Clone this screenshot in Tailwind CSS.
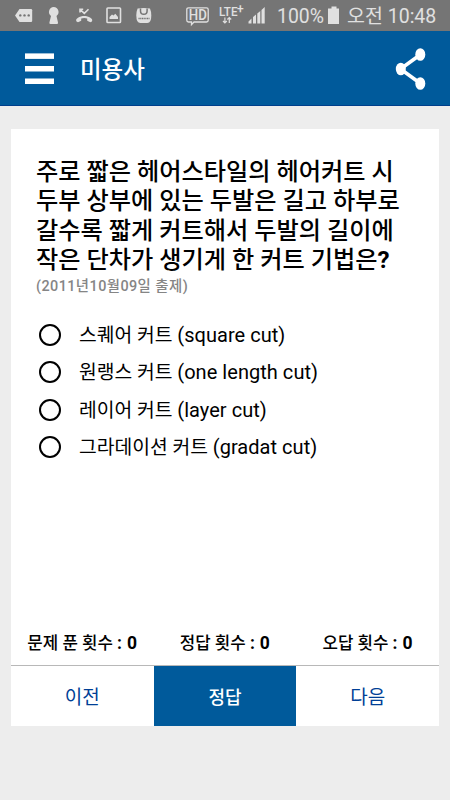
<!DOCTYPE html>
<html lang="ko">
<head>
    <meta charset="UTF-8">
    <meta name="viewport" content="width=device-width, initial-scale=1.0">
    <title>미용사</title>
    <script src="https://cdn.jsdelivr.net/npm/@tailwindcss/browser@4"></script>
</head>
<body class="h-[800px] overflow-hidden bg-[#ededed] font-[Roboto,'Noto_Sans_CJK_KR',sans-serif] text-black flex flex-col">
    <!-- Status bar -->
    <div class="h-[31px] shrink-0 bg-[#757575] flex items-center text-[#e0e0e0]">
        <svg class="w-[160px] h-[31px]" viewBox="0 0 160 31" fill="#e0e0e0">
            <path d="M19.5 9H31a1.2 1.2 0 0 1 1.2 1.2V20.8a1.2 1.2 0 0 1-1.2 1.2H19.5L15 15.5z"/>
            <g fill="#757575"><circle cx="20.3" cy="15.4" r="1.2"/><circle cx="24.5" cy="15.4" r="1.2"/><circle cx="28.7" cy="15.4" r="1.2"/></g>
            <path d="M53.7 7a5 5 0 0 1 2.8 9L58 22.5q.3 1.5-1.2 1.5h-6.2q-1.5 0-1.2-1.5L51 16a5 5 0 0 1 2.7-9z"/>
            <path d="M76.5 21.5c-1-1.8.2-3 1.5-3.8 3.6-2.2 8.8-2.2 12.4 0 1.3.8 2.5 2 1.5 3.8l-1.5.7-3.2-1.5v-2.1c-2-.8-4-.8-6 0v2.1L78 22.2z"/>
            <path d="M80 12.5V9.3h3.2M80.3 9.6l4 3.8 4.2-4.2" fill="none" stroke="#e0e0e0" stroke-width="1.6"/>
            <rect x="107" y="8" width="13.5" height="14.5" rx=".8" fill="none" stroke="#e0e0e0" stroke-width="1.6"/>
            <path d="M109.5 19v-2l2.5-2.5 1.5 1 1.8-1.8 2.7 3.3v2z"/>
            <path d="M137.6 8.5q6.2-1.2 12.4 0 1.3 3 1.3 7 0 7.5-4 7.5h-7q-4 0-4-7.5 0-4 1.3-7z"/>
            <path d="M140.5 8.5v2.5a3.3 3.3 0 0 0 6.6 0V8.5" fill="none" stroke="#757575" stroke-width="1.5"/>
            <path d="M138.5 18.5h11" stroke="#757575" stroke-width="1.4" stroke-dasharray="1.2 .5"/>
        </svg>
        <svg class="w-[112px] h-[31px] ml-[2px] mr-[3px]" viewBox="162 0 112 31" fill="#e0e0e0">
            <path d="M188.5 7.8h18q1.7 0 1.7 1.7v10.8q0 1.7-1.7 1.7h-12.5l-2.5 2.6V22h-3q-1.7 0-1.7-1.7V9.5q0-1.7 1.7-1.7z" fill="none" stroke="#e0e0e0" stroke-width="1.3"/>
            <text x="188.8" y="20" font-size="14.5" font-weight="500" textLength="18" lengthAdjust="spacingAndGlyphs">HD</text>
            <text x="219" y="16" font-size="12" font-weight="500" textLength="18.5" lengthAdjust="spacingAndGlyphs">LTE</text>
            <text x="237" y="13" font-size="12" font-weight="500">+</text>
            <path d="M224.9 17.5v5.5M223 21l1.9 2 1.9-2M229.3 23V17.5M227.4 19.5l1.9-2 1.9 2" fill="none" stroke="#e0e0e0" stroke-width="1.2"/>
            <path d="M248.5 21.5 251.5 18.5V23.5H248.5zM253 17 256 14.5V23.5H253zM257.3 13.5 260.3 11V23.5H257.3zM261.5 10 264.7 7V23.5H261.5z"/>
        </svg>
        <span class="text-[19.4px] w-[51px] whitespace-nowrap pt-[2px]">100%</span>
        <svg class="w-[12px] h-[31px]" viewBox="0 0 12 31" fill="#e0e0e0"><path d="M3.5 6.5h5v2H11V24H0V8.5h3.5z"/></svg>
        <span class="ml-[7px] whitespace-nowrap text-[19.5px] pt-[2px]">오전 10:48</span>
    </div>

    <!-- Header -->
    <header class="h-[75px] shrink-0 bg-[#005a9b] border-b border-[#003f8c] flex items-center pl-[25px] pr-6">
        <svg class="w-[29px] h-[32px] mt-px" viewBox="0 0 29 32" fill="#fff">
            <rect y=".4" width="29" height="5.5"/>
            <rect y="13" width="29" height="5.5"/>
            <rect y="25.5" width="29" height="5.5"/>
        </svg>
        <h1 class="ml-[26px] pt-[6px] text-[23.5px] font-medium text-white">미용사</h1>
        <svg class="ml-auto mt-px w-[31px] h-[44px]" viewBox="395 47 31 44" fill="#fff">
            <path d="M420.5 54.5 400.5 69 420.5 83.5" fill="none" stroke="#fff" stroke-width="3.6"/>
            <ellipse cx="420.3" cy="54.5" rx="5" ry="6.3"/>
            <ellipse cx="400.8" cy="69" rx="5" ry="6.3"/>
            <ellipse cx="420.3" cy="83.5" rx="5" ry="6.3"/>
        </svg>
    </header>

    <!-- Question card -->
    <main class="mt-[23px] ml-[11px] w-[428px] h-[597px] bg-white flex flex-col">
        <h2 class="pl-[25px] pt-[29px] text-[24.2px] leading-[29.3px] font-medium whitespace-nowrap">주로 짧은 헤어스타일의 헤어커트 시<br>두부 상부에 있는 두발은 길고 하부로<br>갈수록 짧게 커트해서 두발의 길이에<br>작은 단차가 생기게 한 커트 기법은<b>?</b></h2>
        <p class="pl-[25px] mt-[3px] text-[14.4px] leading-[18px] tracking-[0.43px] font-medium text-[#858585]">(2011년10월09일 출제)</p>
        <ul class="mt-[20px] pl-[28px] text-[19.3px] leading-[37.5px]">
            <li class="h-[37.5px] flex items-center"><span class="size-[22px] rounded-full border-2 border-black mr-[18px]"></span><span class="pt-px">스퀘어 커트 <span class="text-[20px] tracking-[0.04px]">(square cut)</span></span></li>
            <li class="h-[37.5px] flex items-center"><span class="size-[22px] rounded-full border-2 border-black mr-[18px]"></span><span class="pt-px">원랭스 커트 <span class="text-[20px] tracking-[0.04px]">(one length cut)</span></span></li>
            <li class="h-[37.5px] flex items-center"><span class="size-[22px] rounded-full border-2 border-black mr-[18px]"></span><span class="pt-px">레이어 커트 <span class="text-[20px] tracking-[0.04px]">(layer cut)</span></span></li>
            <li class="h-[37.5px] flex items-center"><span class="size-[22px] rounded-full border-2 border-black mr-[18px]"></span><span class="pt-px">그라데이션 커트 <span class="text-[20px] tracking-[0.04px]">(gradat cut)</span></span></li>
        </ul>
        <div class="mt-auto h-[49px] pt-[5px] grid grid-cols-3 items-center text-center text-[16.8px] font-medium">
            <span>문제 푼 횟수 <b class="text-[17.5px] tracking-[0.3px]">: 0</b></span>
            <span>정답 횟수 <b class="text-[17.5px] tracking-[0.3px]">: 0</b></span>
            <span>오답 횟수 <b class="text-[17.5px] tracking-[0.3px]">: 0</b></span>
        </div>
        <div class="h-[61px] shrink-0 border-t border-[#b8b8b8] grid grid-cols-3 text-[19px] text-[#003f96]">
            <button class="pt-[4px]">이전</button>
            <button class="pt-[2px] bg-[#005a9b] text-[18px] text-white font-medium">정답</button>
            <button class="pt-[4px]">다음</button>
        </div>
    </main>
</body>
</html>
